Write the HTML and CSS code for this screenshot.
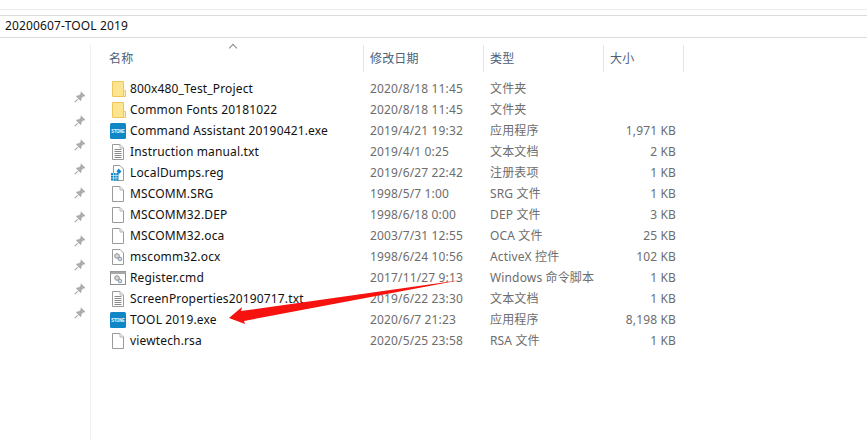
FILE: index.html
```html
<!DOCTYPE html>
<html lang="en">
<head>
    <meta charset="UTF-8">
    <meta name="viewport" content="width=device-width, initial-scale=1.0">
    <title>20200607-TOOL 2019</title>
    <link rel="stylesheet" href="styles.css">
</head>
<body>
    <svg width="0" height="0" class="defs">
        <defs>
            <symbol id="pin" viewBox="0 0 12 12">
                <path d="M7 0.5 L11.5 5 L10.3 5.6 L9.4 5.2 L7.4 7.4 L7.5 9.3 L6.6 10 L2 5.4 L2.8 4.5 L4.7 4.6 L6.9 2.6 L6.5 1.6 Z" fill="#a9adb2"/>
                <path d="M3.8 8.2 L0.8 11.2" stroke="#a9adb2" stroke-width="1.2"/>
            </symbol>
            <symbol id="folder" viewBox="0 0 14 16">
                <path d="M0.5 0.5 H11.5 V15.5 H0.5 Z" fill="#fde48f" stroke="#eec65c"/>
                <path d="M11.5 9.5 H13.5 V15.5 H11.5 Z" fill="#fdf0b8" stroke="#eec65c"/>
            </symbol>
            <symbol id="stone" viewBox="0 0 16 16">
                <rect width="16" height="16" rx="1.5" fill="#0f86c6"/>
                <text x="8" y="9.6" class="stone-label" text-anchor="middle" textLength="13.5" lengthAdjust="spacingAndGlyphs">STONE</text>
            </symbol>
            <symbol id="blank" viewBox="0 0 12 16">
                <path d="M0.5 0.5 H8 L11.5 4 V15.5 H0.5 Z" fill="#fff" stroke="#9a9a9a"/>
                <path d="M8 0.5 V4 H11.5" fill="#f0f0f0" stroke="#b5b5b5"/>
            </symbol>
            <symbol id="text" viewBox="0 0 12 16">
                <path d="M0.5 0.5 H8 L11.5 4 V15.5 H0.5 Z" fill="#fff" stroke="#9a9a9a"/>
                <path d="M8 0.5 V4 H11.5" fill="#f0f0f0" stroke="#b5b5b5"/>
                <path d="M2.5 5.5 H9.5 M2.5 7.5 H9.5 M2.5 9.5 H9.5 M2.5 11.5 H9.5 M2.5 13.5 H9.5" stroke="#8a8a8a"/>
            </symbol>
            <symbol id="reg" viewBox="0 0 14 16">
                <path d="M2.5 0.5 H9 L12.5 4 V15.5 H2.5 Z" fill="#fff" stroke="#9a9a9a"/>
                <path d="M0 8 H7.5 V15.5 H0 Z" fill="#0f86c6"/>
                <path d="M2.5 8 V15.5 M5 8 V15.5 M0 10.5 H7.5 M0 13 H7.5" stroke="#fff" stroke-width="0.6"/>
                <path d="M7.5 3.5 L10.5 6.5 L8 9 L5.5 6.5 Z" fill="#0f86c6"/>
            </symbol>
            <symbol id="gear" viewBox="0 0 12 16">
                <path d="M0.5 0.5 H8 L11.5 4 V15.5 H0.5 Z" fill="#fff" stroke="#9a9a9a"/>
                <circle cx="5" cy="7" r="2.3" fill="#d8d8d8" stroke="#8d8d8d"/>
                <circle cx="8" cy="10" r="1.8" fill="#cfdcea" stroke="#8d9bab"/>
            </symbol>
            <symbol id="cmd" viewBox="0 0 16 14">
                <rect x="0.5" y="0.5" width="15" height="13" fill="#fff" stroke="#8e8e8e"/>
                <rect x="0.5" y="0.5" width="15" height="2.5" fill="#a8a8a8"/>
                <circle cx="7" cy="7" r="2.3" fill="#d8d8d8" stroke="#8d8d8d"/>
                <circle cx="10" cy="10" r="1.8" fill="#cfdcea" stroke="#8d9bab"/>
            </symbol>
        </defs>
    </svg>

    <div class="path-bar">
        <div class="path">20200607-TOOL 2019</div>
    </div>

    <div class="explorer">
        <aside class="quick">
            <svg class="pin"><use href="#pin"/></svg>
            <svg class="pin"><use href="#pin"/></svg>
            <svg class="pin"><use href="#pin"/></svg>
            <svg class="pin"><use href="#pin"/></svg>
            <svg class="pin"><use href="#pin"/></svg>
            <svg class="pin"><use href="#pin"/></svg>
            <svg class="pin"><use href="#pin"/></svg>
            <svg class="pin"><use href="#pin"/></svg>
            <svg class="pin"><use href="#pin"/></svg>
            <svg class="pin"><use href="#pin"/></svg>
        </aside>

        <main class="files">
            <div class="head">
                <div class="col-h col-name">名称<span class="sort"></span></div>
                <div class="col-h">修改日期</div>
                <div class="col-h">类型</div>
                <div class="col-h col-last">大小</div>
            </div>

            <div class="row"><div class="name"><svg class="ico"><use href="#folder" x="2" width="14" height="16"/></svg>800x480_Test_Project</div><div class="cell">2020/8/18 11:45</div><div class="cell">文件夹</div><div class="size"></div></div>
            <div class="row"><div class="name"><svg class="ico"><use href="#folder" x="2" width="14" height="16"/></svg>Common Fonts 20181022</div><div class="cell">2020/8/18 11:45</div><div class="cell">文件夹</div><div class="size"></div></div>
            <div class="row"><div class="name"><svg class="ico"><use href="#stone" width="16" height="16"/></svg>Command Assistant 20190421.exe</div><div class="cell">2019/4/21 19:32</div><div class="cell">应用程序</div><div class="size">1,971 KB</div></div>
            <div class="row"><div class="name"><svg class="ico"><use href="#text" x="2" width="12" height="16"/></svg>Instruction manual.txt</div><div class="cell">2019/4/1 0:25</div><div class="cell">文本文档</div><div class="size">2 KB</div></div>
            <div class="row"><div class="name"><svg class="ico"><use href="#reg" width="14" height="16" x="1"/></svg>LocalDumps.reg</div><div class="cell">2019/6/27 22:42</div><div class="cell">注册表项</div><div class="size">1 KB</div></div>
            <div class="row"><div class="name"><svg class="ico"><use href="#blank" x="2" width="12" height="16"/></svg>MSCOMM.SRG</div><div class="cell">1998/5/7 1:00</div><div class="cell">SRG 文件</div><div class="size">1 KB</div></div>
            <div class="row"><div class="name"><svg class="ico"><use href="#blank" x="2" width="12" height="16"/></svg>MSCOMM32.DEP</div><div class="cell">1998/6/18 0:00</div><div class="cell">DEP 文件</div><div class="size">3 KB</div></div>
            <div class="row"><div class="name"><svg class="ico"><use href="#blank" x="2" width="12" height="16"/></svg>MSCOMM32.oca</div><div class="cell">2003/7/31 12:55</div><div class="cell">OCA 文件</div><div class="size">25 KB</div></div>
            <div class="row"><div class="name"><svg class="ico"><use href="#gear" x="2" width="12" height="16"/></svg>mscomm32.ocx</div><div class="cell">1998/6/24 10:56</div><div class="cell">ActiveX 控件</div><div class="size">102 KB</div></div>
            <div class="row"><div class="name"><svg class="ico"><use href="#cmd" y="1" width="16" height="14"/></svg>Register.cmd</div><div class="cell">2017/11/27 9:13</div><div class="cell">Windows 命令脚本</div><div class="size">1 KB</div></div>
            <div class="row"><div class="name"><svg class="ico"><use href="#text" x="2" width="12" height="16"/></svg>ScreenProperties20190717.txt</div><div class="cell">2019/6/22 23:30</div><div class="cell">文本文档</div><div class="size">1 KB</div></div>
            <div class="row"><div class="name"><svg class="ico"><use href="#stone" width="16" height="16"/></svg>TOOL 2019.exe</div><div class="cell">2020/6/7 21:23</div><div class="cell">应用程序</div><div class="size">8,198 KB</div></div>
            <div class="row"><div class="name"><svg class="ico"><use href="#blank" x="2" width="12" height="16"/></svg>viewtech.rsa</div><div class="cell">2020/5/25 23:58</div><div class="cell">RSA 文件</div><div class="size">1 KB</div></div>
        </main>
    </div>

    <svg class="arrow" width="867" height="441">
        <path d="M461 280 L241 311 L242 307 L229 318 L245 324 L244 321 Z" fill="#f5120f"/>
    </svg>
</body>
</html>
```

FILE: styles.css
```css
body {
    margin: 0;
    width: 867px;
    height: 441px;
    overflow: hidden;
    position: relative;
    background-color: #fff;
    font-family: 'Noto Sans', 'Noto Sans CJK SC', sans-serif;
    font-size: 12px;
    letter-spacing: 0.15px;
    color: #111;
}
.defs {
    position: absolute;
}
.stone-label {
    font-family: 'Liberation Sans', sans-serif;
    font-size: 4.8px;
    font-weight: 700;
    letter-spacing: 0;
    fill: #fff;
}
.path-bar {
    padding-top: 9px;
}
.path-bar::before {
    content: "";
    display: block;
    height: 1px;
    background-color: #ececec;
    margin-bottom: 5px;
}
.path {
    height: 21px;
    line-height: 19px;
    padding-left: 5px;
    border-top: 1px solid #dcdcdc;
    border-bottom: 1px solid #dcdcdc;
}
.explorer {
    display: flex;
    height: 403px;
}
.quick {
    box-sizing: border-box;
    width: 91px;
    margin-top: 7px;
    padding: 46px 4px 0 0;
    border-right: 1px solid #f0f0f0;
    display: flex;
    flex-direction: column;
    align-items: flex-end;
    gap: 12px;
}
.pin {
    width: 12px;
    height: 12px;
}
.files {
    flex: 1;
}
.head {
    display: flex;
    height: 27px;
    margin-top: 7px;
    margin-bottom: 6px;
}
.col-h {
    box-sizing: border-box;
    width: 120px;
    padding-left: 6px;
    line-height: 27px;
    color: #4c607a;
    border-right: 1px solid #e5e5e5;
}
.col-name {
    width: 273px;
    padding-left: 18px;
    position: relative;
}
.col-last {
    width: 80px;
}
.sort {
    position: absolute;
    left: 139px;
    top: 0;
    width: 5px;
    height: 5px;
    border-top: 1px solid #8a8a8a;
    border-left: 1px solid #8a8a8a;
    transform: rotate(45deg);
}
.row {
    display: flex;
    height: 21px;
    line-height: 21px;
}
.name {
    width: 273px;
    padding-left: 19px;
    box-sizing: border-box;
    display: flex;
    align-items: center;
    white-space: nowrap;
}
.ico {
    width: 16px;
    height: 16px;
    margin-right: 4px;
    flex-shrink: 0;
}
.cell {
    box-sizing: border-box;
    width: 120px;
    padding-left: 6px;
    color: #6d6d6d;
    white-space: nowrap;
}
.size {
    width: 72px;
    text-align: right;
    color: #6d6d6d;
    white-space: nowrap;
}
.arrow {
    position: absolute;
    left: 0;
    top: 0;
}
```
